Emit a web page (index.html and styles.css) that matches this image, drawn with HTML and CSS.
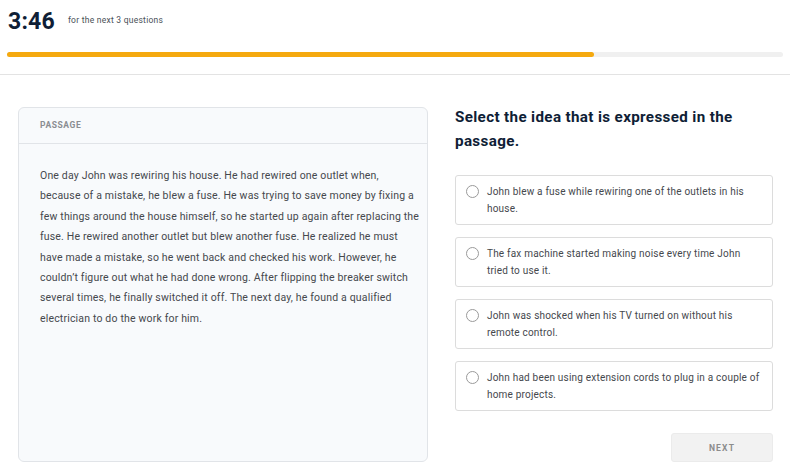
FILE: index.html
```html
<!DOCTYPE html>
<html lang="en">
<head>
<meta charset="utf-8">
<title>Question</title>
<link rel="stylesheet" href="styles.css">
</head>
<body>
<header class="top">
  <div class="timer-row">
    <span class="timer">3:46</span>
    <span class="timer-note">for the next 3 questions</span>
  </div>
  <div class="progress"><div class="progress-fill" style="width: 75.6%"></div></div>
</header>
<main class="main">
  <section class="passage">
    <div class="passage-head">PASSAGE</div>
    <p class="passage-text">One day John was rewiring his house. He had rewired one outlet when,<br>
because of a mistake, he blew a fuse. He was trying to save money by fixing a<br>
few things around the house himself, so he started up again after replacing the<br>
fuse. He rewired another outlet but blew another fuse. He realized he must<br>
have made a mistake, so he went back and checked his work. However, he<br>
couldn’t figure out what he had done wrong. After flipping the breaker switch<br>
several times, he finally switched it off. The next day, he found a qualified<br>
electrician to do the work for him.</p>
  </section>
  <section class="question">
    <h1 class="q-title">Select the idea that is expressed in the passage.</h1>
    <div class="options">
      <label class="option"><span class="radio"></span><span class="opt-text">John blew a fuse while rewiring one of the outlets in his<br>house.</span></label>
      <label class="option"><span class="radio"></span><span class="opt-text">The fax machine started making noise every time John<br>tried to use it.</span></label>
      <label class="option"><span class="radio"></span><span class="opt-text">John was shocked when his TV turned on without his<br>remote control.</span></label>
      <label class="option"><span class="radio"></span><span class="opt-text">John had been using extension cords to plug in a couple of<br>home projects.</span></label>
    </div>
    <div class="actions"><button class="next">NEXT</button></div>
  </section>
</main>
</body>
</html>
```
FILE: styles.css
```css
* { box-sizing: border-box; }
body {
  margin: 0;
  background: #fff;
  font-family: Roboto, "Noto Sans", sans-serif;
  color: #444;
}
.top {
  padding: 6px 7px 0 7px;
  border-bottom: 1px solid #e3e3e3;
  height: 75px;
}
.timer-row {
  display: flex;
  align-items: center;
  height: 30px;
  padding-left: 1px;
}
.timer {
  font-size: 23px;
  font-weight: 700;
  color: #0f1e36;
  letter-spacing: 0.2px;
}
.timer-note {
  font-size: 8.5px;
  letter-spacing: 0.25px;
  color: #4a4f57;
  margin-left: 13px;
  margin-top: -3px;
}
.progress {
  margin-top: 16px;
  height: 5px;
  border-radius: 3px;
  background: #f0f0f0;
  width: 776px;
}
.progress-fill {
  height: 100%;
  border-radius: 3px;
  background: #f5a90f;
}
.main {
  display: grid;
  grid-template-columns: 410px 318px;
  column-gap: 27px;
  padding: 32px 17px 0 18px;
}
.passage {
  height: 355px;
  background: #f8fafc;
  border: 1px solid #e1e4e8;
  border-radius: 6px;
}
.passage-head {
  height: 36px;
  padding: 12px 21px 0;
  font-size: 8.5px;
  font-weight: 700;
  letter-spacing: 0.6px;
  color: #8a8d91;
  border-bottom: 1px solid #e1e4e8;
}
.passage-text {
  margin: 22px 0 0 21px;
  font-size: 10.5px;
  line-height: 20.4px;
  letter-spacing: 0.17px;
  white-space: nowrap;
  color: #45484d;
}
.q-title {
  margin: -2px 0 0;
  font-size: 15.2px;
  line-height: 24px;
  font-weight: 700;
  letter-spacing: 0.35px;
  color: #0f1e36;
}
.options {
  margin-top: 22px;
  display: flex;
  flex-direction: column;
  gap: 12px;
}
.option {
  display: flex;
  align-items: flex-start;
  height: 50px;
  padding: 8px 6px 0 10px;
  border: 1px solid #dcdcdc;
  border-radius: 3px;
  background: #fff;
}
.radio {
  flex: none;
  width: 13px;
  height: 13px;
  border: 1px solid #9a9a9a;
  border-radius: 50%;
  margin-top: 1px;
  margin-right: 8px;
}
.opt-text {
  font-size: 10px;
  line-height: 16.5px;
  letter-spacing: 0.2px;
  white-space: nowrap;
  color: #45484d;
}
.actions {
  display: flex;
  justify-content: flex-end;
  margin-top: 22px;
}
.next {
  width: 102px;
  height: 29px;
  border: 1px solid #ebebeb;
  border-radius: 3px;
  background: #f2f2f2;
  font-family: Roboto, "Noto Sans", sans-serif;
  font-size: 8.5px;
  font-weight: 700;
  letter-spacing: 1.2px;
  color: #8c8c8c;
}
```
